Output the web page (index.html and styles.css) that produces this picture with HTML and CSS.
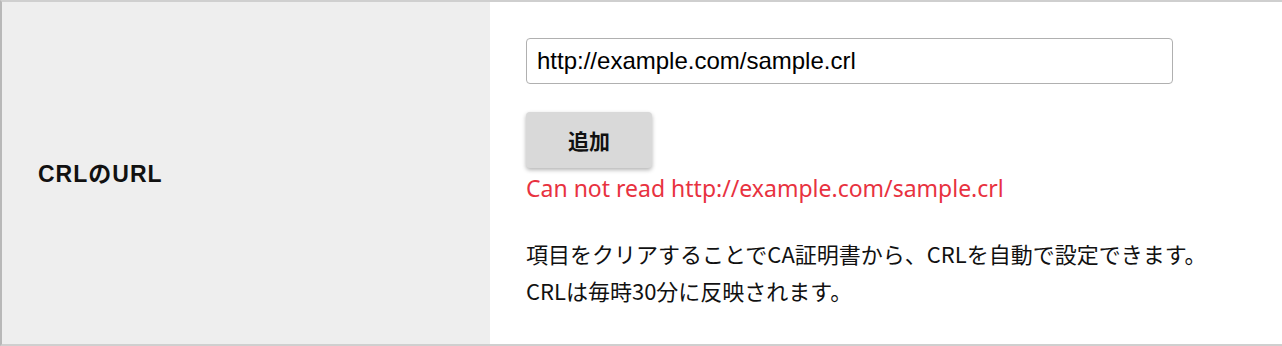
FILE: index.html
```html
<!DOCTYPE html>
<html lang="ja">
<head>
<meta charset="utf-8">
<title>CRL</title>
<link rel="stylesheet" href="styles.css">
</head>
<body>
<div class="row">
  <div class="label-cell">CRLのURL</div>
  <div class="value-cell">
    <input class="url-input" type="text" value="http://example.com/sample.crl">
    <button class="add-btn" type="button">追加</button>
    <div class="error">Can not read http://example.com/sample.crl</div>
    <p class="note">項目をクリアすることでCA証明書から、CRLを自動で設定できます。<br>CRLは毎時30分に反映されます。</p>
  </div>
</div>
</body>
</html>
```
FILE: styles.css
```css
html, body {
  margin: 0;
  padding: 0;
  background: #fff;
}
body {
  font-family: "Liberation Sans", "Noto Sans CJK JP", sans-serif;
  color: #111;
}
.row {
  display: flex;
  height: 342px;
  border-top: 2px solid #cfcfcf;
  border-bottom: 2px solid #cfcfcf;
  border-left: 2px solid #b8b8b8;
}
.label-cell {
  width: 488px;
  flex: none;
  background: #eeeeee;
  display: flex;
  align-items: center;
  padding-left: 36px;
  padding-bottom: 2px;
  box-sizing: border-box;
  font-family: "Liberation Sans", "Noto Sans CJK JP", sans-serif;
  font-weight: bold;
  font-size: 23px;
  letter-spacing: 1px;
  color: #111;
}
.value-cell {
  flex: 1;
  padding: 36px 0 0 36px;
  display: flex;
  flex-direction: column;
  align-items: flex-start;
}
.url-input {
  width: 647px;
  height: 46px;
  box-sizing: border-box;
  border: 1px solid #b0b0b0;
  border-radius: 4px;
  padding: 0 10px;
  font-family: "Liberation Sans", sans-serif;
  font-size: 24px;
  color: #000;
  background: #fff;
  margin: 0;
}
.add-btn {
  margin-top: 28px;
  width: 126px;
  height: 56px;
  border: none;
  border-radius: 4px;
  background: #d9d9d9;
  box-shadow: 0 2px 4px rgba(0, 0, 0, 0.3);
  font-family: "Noto Sans CJK JP", sans-serif;
  font-weight: bold;
  font-size: 21px;
  color: #111;
  padding: 0;
}
.error {
  margin-top: 5px;
  font-family: "Noto Sans", "Noto Sans CJK JP", sans-serif;
  font-size: 23px;
  line-height: 30px;
  color: #e8323f;
}
.note {
  margin: 32px 0 0;
  font-family: "Noto Sans CJK JP", sans-serif;
  font-size: 22px;
  line-height: 37px;
  color: #111;
}
```
